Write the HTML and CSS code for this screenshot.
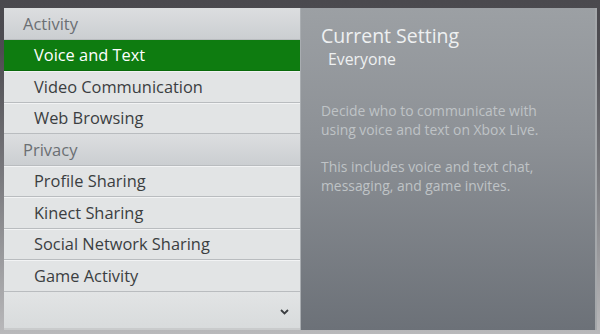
FILE: index.html
```html
<!DOCTYPE html>
<html>
<head>
<meta charset="utf-8">
<link rel="stylesheet" href="styles.css">
</head>
<body>
<div class="screen">
  <div class="list">
    <div class="row header">Activity</div>
    <div class="row item selected">Voice and Text</div>
    <div class="row item">Video Communication</div>
    <div class="row item">Web Browsing</div>
    <div class="row header">Privacy</div>
    <div class="row item">Profile Sharing</div>
    <div class="row item">Kinect Sharing</div>
    <div class="row item">Social Network Sharing</div>
    <div class="row item">Game Activity</div>
    <div class="more">
      <svg width="9" height="6" viewBox="0 0 9 6"><path d="M1 1 L4.5 4.5 L8 1" fill="none" stroke="#3a3d40" stroke-width="1.8"/></svg>
    </div>
  </div>
  <div class="detail">
    <div class="title">Current Setting</div>
    <div class="value">Everyone</div>
    <p class="desc">Decide who to communicate with using voice and text on Xbox Live.</p>
    <p class="desc">This includes voice and text chat, messaging, and game invites.</p>
  </div>
</div>
</body>
</html>
```
FILE: styles.css
```css
* { box-sizing: border-box; }
html, body { margin: 0; height: 100%; }
body {
  background: linear-gradient(to bottom, #4a494e 0%, #4d4c51 15%, #7c7c80 55%, #b9b9bb 100%);
  font-family: "Open Sans", "Noto Sans", sans-serif;
  overflow: hidden;
}
.screen {
  display: flex;
  padding: 8px 3px 0 4px;
  height: 330px;
}
.list {
  width: 296px;
  display: flex;
  flex-direction: column;
  background: #e2e4e5;
}
.row {
  height: 31.5px;
  display: flex;
  align-items: center;
  border-bottom: 1px solid #b9bcbf;
  box-shadow: inset 0 1px 0 #f2f3f4;
}
.header {
  background: linear-gradient(to bottom, #dcdee0, #cbced1);
  color: #6b6f73;
  font-size: 16.5px;
  padding-left: 19px;
  box-shadow: none;
}
.item {
  color: #3b3e41;
  font-size: 16.4px;
  padding-left: 30px;
}
.selected {
  background: #0e7c10;
  color: #ffffff;
  box-shadow: none;
  border-bottom-color: #0a6a0c;
}
.more {
  flex: 1;
  display: flex;
  justify-content: flex-end;
  align-items: center;
  padding-right: 11px;
  padding-top: 4px;
  background: linear-gradient(to bottom, #e2e4e5, #d8dbdc);
  border-bottom: 2px solid #c9cbcc;
}
.detail {
  flex: 1;
  background: linear-gradient(to bottom, #9ca0a4 0%, #8d9196 40%, #6c7178 100%);
  border-left: 1px solid #a9adb1;
  border-right: 2px solid #a4a7aa;
  padding: 16px 20px 0 20px;
}
.title {
  color: #eef0f1;
  font-size: 19.5px;
  line-height: 24px;
}
.value {
  color: #eef0f1;
  font-size: 15.8px;
  line-height: 22px;
  padding-left: 7px;
  margin-top: 0;
}
.desc {
  margin: 31px 0 0 0;
  color: #bfc3c6;
  font-size: 13.9px;
  line-height: 19px;
}
.desc + .desc { margin-top: 18px; }
```
